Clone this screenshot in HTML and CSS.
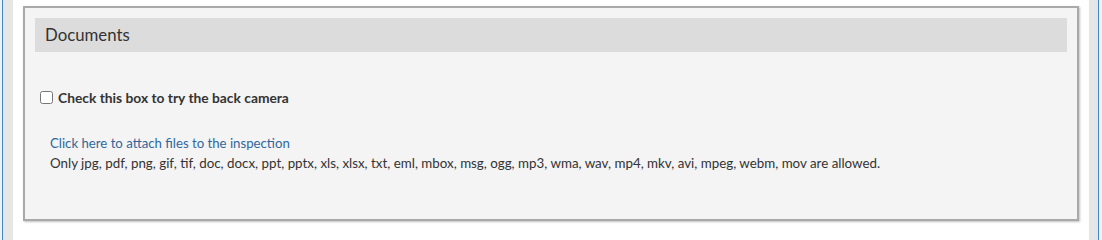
FILE: index.html
```html
<!DOCTYPE html>
<html lang="en">
<head>
<meta charset="utf-8">
<title>Documents</title>
<link rel="stylesheet" href="styles.css">
</head>
<body>
<div class="frame">
  <div class="sheet">
    <section class="panel">
      <div class="panel-heading">Documents</div>
      <div class="panel-body">
        <label class="camera-row">
          <input type="checkbox" class="camera-check">
          <span class="camera-label">Check this box to try the back camera</span>
        </label>
        <div class="attach">
          <a class="attach-link" href="#">Click here to attach files to the inspection</a>
          <div class="attach-note">Only jpg, pdf, png, gif, tif, doc, docx, ppt, pptx, xls, xlsx, txt, eml, mbox, msg, ogg, mp3, wma, wav, mp4, mkv, avi, mpeg, webm, mov are allowed.</div>
        </div>
      </div>
    </section>
  </div>
</div>
</body>
</html>
```

FILE: styles.css
```css
html, body {
  margin: 0;
  padding: 0;
  height: 100%;
}

body {
  background: #f1f1f1;
  font-family: "Lato", "Liberation Sans", sans-serif;
  color: #333;
}

.frame {
  margin: 0 3px 0 2px;
  height: 100%;
  box-sizing: border-box;
  border-left: 1px solid #3c87c5;
  border-right: 1px solid #3c87c5;
  background: #e6e6e6;
  padding: 0 9px 0 10px;
}

.sheet {
  background: #fff;
  height: 100%;
  box-sizing: border-box;
  padding: 6px 10px 0 10px;
}

.panel {
  background: #f4f4f4;
  border: 2px solid #a9a9a9;
  box-shadow: 1px 1px 2px rgba(0, 0, 0, 0.25);
  padding: 10px;
  height: 215px;
  box-sizing: border-box;
}

.panel-heading {
  background: #dcdcdc;
  height: 34px;
  line-height: 34px;
  padding-left: 10px;
  font-size: 16.8px;
  color: #333;
}

.panel-body {
  display: flex;
  flex-direction: column;
}

.camera-row {
  display: flex;
  align-items: center;
  gap: 5px;
  margin-top: 35px;
  height: 20px;
}

.camera-check {
  margin: 0 0 0 5px;
  width: 13px;
  height: 13px;
}

.camera-label {
  font-weight: bold;
  font-size: 13.8px;
  color: #333;
}

.attach {
  margin-top: 26px;
  padding-left: 15px;
  font-size: 13.35px;
  line-height: 20px;
}

.attach-link {
  color: #30679c;
  text-decoration: none;
  font-size: 13.2px;
}

.attach-note {
  color: #333;
}
```
